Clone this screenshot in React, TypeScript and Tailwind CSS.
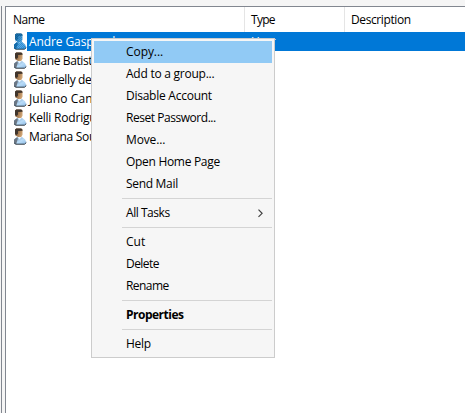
type Entry = { label: string; spacing: string; bold?: boolean; submenu?: boolean; active?: boolean };

const groups: Entry[][] = [
  [
    { label: 'Copy...', spacing: 'tracking-[-0.07px]', active: true },
    { label: 'Add to a group...', spacing: 'tracking-[-0.25px]' },
    { label: 'Disable Account', spacing: 'tracking-[-0.25px]' },
    { label: 'Reset Password...', spacing: 'tracking-[-0.46px]' },
    { label: 'Move...', spacing: 'tracking-[-0.13px]' },
    { label: 'Open Home Page', spacing: 'tracking-[-0.3px]' },
    { label: 'Send Mail', spacing: 'tracking-[-0.31px]' },
  ],
  [{ label: 'All Tasks', spacing: 'tracking-[-0.45px]', submenu: true }],
  [
    { label: 'Cut', spacing: 'tracking-[0px]' },
    { label: 'Delete', spacing: 'tracking-[-0.55px]' },
    { label: 'Rename', spacing: 'tracking-[-0.55px]' },
  ],
  [{ label: 'Properties', spacing: 'tracking-[-0.5px]', bold: true }],
  [{ label: 'Help', spacing: 'tracking-[-0.3px]' }],
];

const users = [
  { name: 'Andre Gaspar de', spacing: 'tracking-[-0.1px]' },
  { name: 'Eliane Batista', spacing: 'tracking-[-0.4px]' },
  { name: 'Gabrielly de', spacing: 'tracking-[-0.35px]' },
  { name: 'Juliano Candido', spacing: 'tracking-[0.1px]' },
  { name: 'Kelli Rodrigues', spacing: 'tracking-[-0.2px]' },
  { name: 'Mariana Souza', spacing: 'tracking-[-0.3px]' },
];

function UserIcon({ selected }: { selected: boolean }) {
  const id = selected ? 'sel' : 'std';
  return (
    <svg width="14" height="17" viewBox="0 0 14 17" className="shrink-0">
      <defs>
        <linearGradient id={`${id}-face`} x1="0" x2="1" y1="0" y2="0.4">
          <stop offset="0" stopColor={selected ? '#1c6596' : '#6b4526'} />
          <stop offset="1" stopColor={selected ? '#5aa2d0' : '#cfa373'} />
        </linearGradient>
        <linearGradient id={`${id}-body`} x1="0" x2="1" y1="0" y2="1">
          <stop offset="0" stopColor={selected ? '#2685c3' : '#7598bf'} />
          <stop offset="0.55" stopColor={selected ? '#62ace0' : '#b9dcf8'} />
          <stop offset="1" stopColor={selected ? '#3d91cd' : '#8fbbe4'} />
        </linearGradient>
        <pattern id="dots" width="2" height="2" patternUnits="userSpaceOnUse">
          <path d="M0 0h1v1H0zM1 1h1v1H1z" fill="#087bd5" opacity=".6" />
        </pattern>
      </defs>
      <path d="M1 15.5V11.5L3.5 9.5 9 9l3 2.2 1.3 3-1.5 1.8H3z" fill={`url(#${id}-body)`} />
      <path d="M1 15.5V11.8L3.3 9.8l1.4-.6v2L3.2 16z" fill={selected ? '#1c6596' : '#6b7683'} />
      <path d="M4.5 8.6l1.8 3 2.8-2.8z" fill={selected ? '#8bc6e9' : '#e9f4fc'} />
      <path d="M2 1.5L3.3.5h5l1.2 1.3v5L8.2 9H5L2.2 7.2z" fill={`url(#${id}-face)`} />
      <path d="M2 6V1.8L3.3.5h5l1.2 1.2v1.1L5 3v2.5L3.6 7z" fill={selected ? '#1b608d' : '#40352c'} />
      <path d="M1.4 15.2l1.4 1h8.7l1.8-1.7" fill="none" stroke={selected ? '#183b50' : '#26323c'} strokeWidth="1" />
      {selected && <path d="M2 1h7v8l4 5-2 2H1v-5l2-3z" fill="url(#dots)" />}
    </svg>
  );
}

function ContextMenu() {
  return (
    <div className="absolute left-[91px] top-[38px] w-[184px] border border-[#cccccc] bg-[#f6f6f6] p-[2px] text-black">
      {groups.map((group, g) => (
        <div key={g}>
          {g > 0 && <div className="ml-7 h-[7px] pt-[3px]"><div className="h-px bg-[#d4d4d4]" /></div>}
          {group.map((item) => (
            <div key={item.label} className={`flex h-[22px] items-center justify-between pl-8 pr-[9px] ${item.active ? 'bg-[#91caf5]' : ''}`}>
              <span className={`${item.spacing} ${item.bold ? 'font-bold' : ''}`}>{item.label}</span>
              {item.submenu && (
                <svg width="5" height="9" viewBox="0 0 5 9" fill="none"><path d="M.5.7l3.6 3.6L.5 7.9" stroke="#404040" strokeWidth="1.2" /></svg>
              )}
            </div>
          ))}
        </div>
      ))}
    </div>
  );
}

export default function App() {
  return (
    <div className="relative flex h-[413px] w-[465px] overflow-hidden bg-[#f5f5f5] font-['Open_Sans','Noto_Sans',sans-serif] text-[12px] leading-4 whitespace-nowrap text-black">
      <div className="mt-[6px] ml-px w-px shrink-0 bg-[#828790]" />
      <div className="mt-[6px] ml-[3px] flex-1 border-t border-l border-[#828790] bg-white">
        <div className="flex h-[25px]">
          <div className="flex w-[239px] items-center border-r border-[#e5e5e5] pt-px pl-[7px] tracking-[-0.5px]">Name</div>
          <div className="flex w-[100px] items-center border-r border-[#e5e5e5] pt-px pl-[6px] tracking-[-0.7px]">Type</div>
          <div className="flex items-center pt-px pl-[6px] tracking-[-0.4px]">Description</div>
        </div>
        {users.map((user, i) => (
          <div key={user.name} className="flex h-[19px] items-center pl-[7px]">
            <UserIcon selected={i === 0} />
            <div className={`flex h-[19px] flex-1 items-center pt-px pl-[2px] ${i === 0 ? 'bg-[#0078d7] text-white' : ''}`}>
              <span className={`w-[222px] ${user.spacing}`}>{user.name}</span>
              {i === 0 && <span className="tracking-[-0.5px]">User</span>}
            </div>
          </div>
        ))}
      </div>
      <ContextMenu />
    </div>
  );
}
